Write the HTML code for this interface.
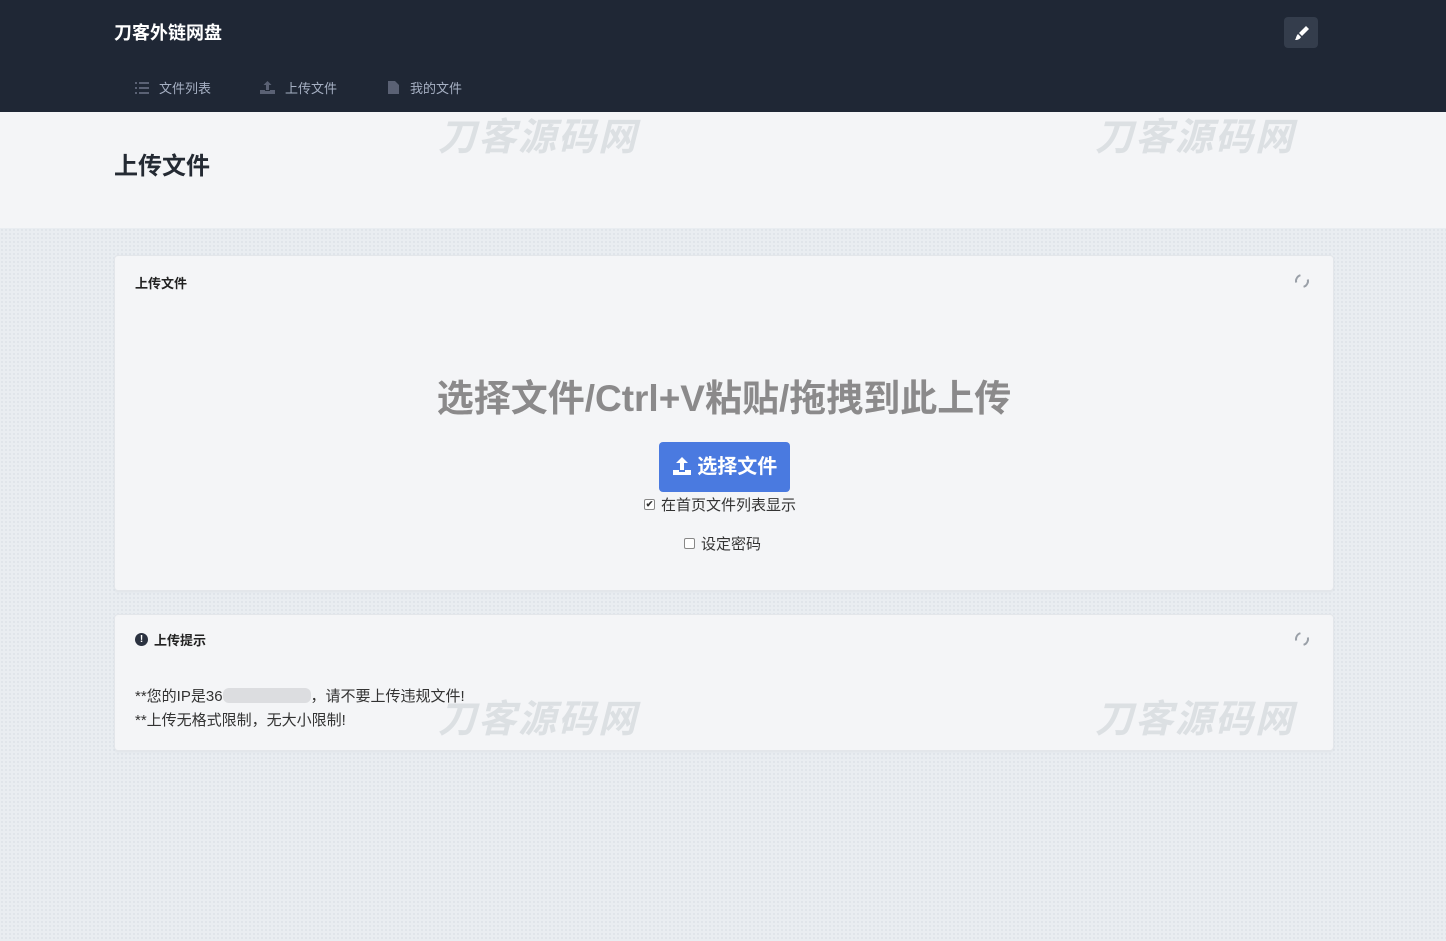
<!DOCTYPE html>
<html><head><meta charset="utf-8"><style>
*{margin:0;padding:0;box-sizing:border-box}
body{width:1446px;height:941px;overflow:hidden;font-family:"Liberation Sans","Noto Sans CJK SC",sans-serif;background:#e9edf1;
background-image:radial-gradient(#dfe4ea 1px,transparent 1.2px);background-size:4px 4px;position:relative}
.hdr{position:absolute;left:0;top:0;width:1446px;height:112px;background:#1f2735}
.brand{position:absolute;left:114px;top:19px;color:#fff;font-size:18px;font-weight:bold}
.pen{position:absolute;left:1284px;top:17px;width:34px;height:31px;background:#343d4c;border-radius:4px}
.nav{position:absolute;top:78px;color:#a6b0c3;font-size:13px;display:flex;align-items:center;gap:10px}
.top{position:absolute;left:0;top:112px;width:1446px;height:116px;background:#f4f5f7}
.title{position:absolute;left:114px;top:146px;font-size:24px;font-weight:bold;color:#242a33}
.wm{position:absolute;font-size:38px;font-weight:bold;font-style:italic;color:rgba(200,205,212,.55);letter-spacing:2px}
.card{position:absolute;left:114px;width:1220px;background:#f4f5f7;border:1px solid #e3e6ea;border-radius:4px;box-shadow:0 1px 2px rgba(0,0,0,.04)}
.ch{position:absolute;left:20px;font-size:13px;font-weight:bold;color:#222}
.ref{position:absolute;right:24px;width:14px;height:14px;border:2px solid #9aa0a8;border-radius:50%;border-top-color:transparent;border-bottom-color:transparent;transform:rotate(30deg)}
.big{position:absolute;left:0;width:100%;top:112px;text-align:center;font-size:37px;font-weight:bold;color:#8b8a8b}
.btn{position:absolute;left:544px;top:186px;width:131px;height:50px;background:#4a7ae0;border-radius:4px;color:#fff;font-size:20px;font-weight:bold;text-align:center;line-height:50px}
.cb{position:absolute;font-size:15px;color:#333;display:flex;align-items:center;gap:6px}
.cb b{display:inline-block;width:11px;height:11px;border:1px solid #888;border-radius:2px;background:#fff;font-size:9px;line-height:9px;text-align:center}
.tip{position:absolute;left:20px;font-size:15px;color:#333}
</style></head><body>
<div class="top"></div>
<div class="hdr">
<div class="brand">刀客外链网盘</div>
<div class="pen"><svg width="34" height="31" viewBox="0 0 34 31"><path d="M22 9l3 3-7 7-3-3z M14 17l3 3c-1 2-3 3-6 3 1-1 1-4 3-6z" fill="#fff"/></svg></div>
<div class="nav" style="left:135px"><svg width="14" height="12"><g fill="#5a6174"><rect x="0" y="0" width="2" height="2"/><rect x="4" y="0" width="10" height="2"/><rect x="0" y="5" width="2" height="2"/><rect x="4" y="5" width="10" height="2"/><rect x="0" y="10" width="2" height="2"/><rect x="4" y="10" width="10" height="2"/></g></svg>文件列表</div>
<div class="nav" style="left:260px"><svg width="15" height="13"><path d="M7.5 0l4 4h-2.5v5h-3v-5h-2.5z M0 9h5v1h5v-1h5v4h-15z" fill="#5a6174"/></svg>上传文件</div>
<div class="nav" style="left:388px"><svg width="12" height="13"><path d="M0 0h7l4 4v9h-11z" fill="#5a6174"/></svg>我的文件</div>
</div>
<div class="title">上传文件</div>
<div class="wm" style="left:438px;top:106px">刀客源码网</div>
<div class="wm" style="left:1095px;top:106px">刀客源码网</div>
<div class="card" style="top:255px;height:336px">
<div class="ch" style="top:17px">上传文件</div><div class="ref" style="top:18px"></div>
<div class="big">选择文件/Ctrl+V粘贴/拖拽到此上传</div>
<div class="btn"><svg width="20" height="20" viewBox="0 0 20 20" style="vertical-align:-3px"><path d="M10 1l6 6h-4v7h-4v-7h-4z M1 14h6v2h6v-2h6v5h-18z" fill="#fff"/></svg> 选择文件</div>
<div class="cb" style="left:529px;top:238px"><b>✔</b>在首页文件列表显示</div>
<div class="cb" style="left:569px;top:277px"><b></b>设定密码</div>
</div>
<div class="card" style="top:614px;height:137px">
<div class="ch" style="top:15px;display:flex;align-items:center;gap:6px"><span style="display:inline-block;width:13px;height:13px;border-radius:50%;background:#2b3240;color:#fff;font-size:10px;line-height:13px;text-align:center">!</span>上传提示</div>
<div class="ref" style="top:17px"></div>
<div class="tip" style="top:70px">**您的IP是36<span style="display:inline-block;width:88px;height:15px;background:#dcdde0;border-radius:6px;vertical-align:-2px"></span>，请不要上传违规文件!</div>
<div class="tip" style="top:94px">**上传无格式限制，无大小限制!</div>
</div>
<div class="wm" style="left:438px;top:688px">刀客源码网</div>
<div class="wm" style="left:1095px;top:688px">刀客源码网</div>
</body></html>
